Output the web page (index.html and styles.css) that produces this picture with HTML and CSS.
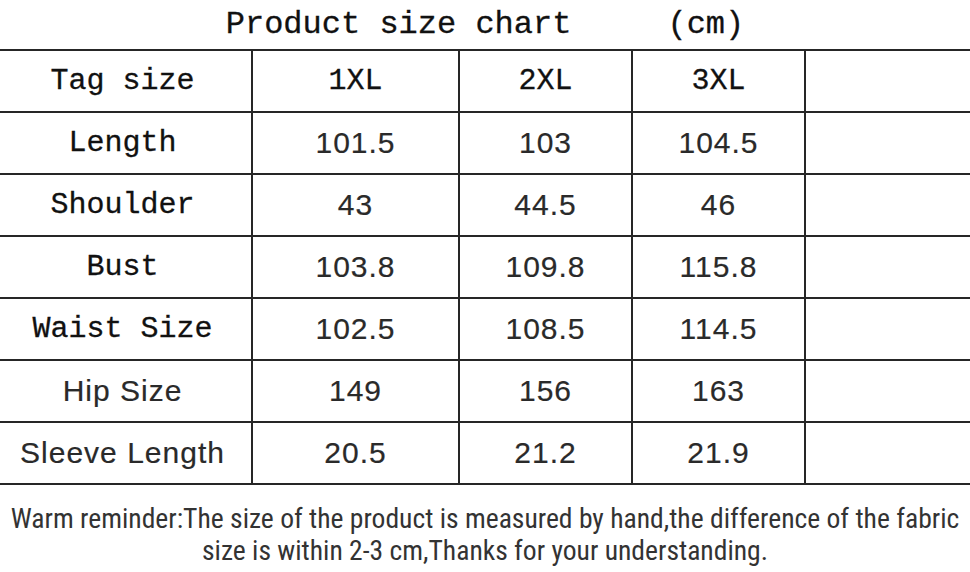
FILE: index.html
```html
<!DOCTYPE html>
<html>
<head>
<meta charset="utf-8">
<link rel="stylesheet" href="styles.css">
</head>
<body>
<div class="chart">
  <h1 class="title">Product size chart     (cm)</h1>
  <table class="sizes">
    <colgroup>
      <col class="c0"><col class="c1"><col class="c2"><col class="c3"><col class="c4">
    </colgroup>
    <tr><td class="mono">Tag size</td><td class="mono">1XL</td><td class="mono">2XL</td><td class="mono">3XL</td><td></td></tr>
    <tr><td class="mono">Length</td><td>101.5</td><td>103</td><td>104.5</td><td></td></tr>
    <tr><td class="mono">Shoulder</td><td>43</td><td>44.5</td><td>46</td><td></td></tr>
    <tr><td class="mono">Bust</td><td>103.8</td><td>109.8</td><td>115.8</td><td></td></tr>
    <tr><td class="mono">Waist Size</td><td>102.5</td><td>108.5</td><td>114.5</td><td></td></tr>
    <tr><td>Hip Size</td><td>149</td><td>156</td><td>163</td><td></td></tr>
    <tr><td>Sleeve Length</td><td>20.5</td><td>21.2</td><td>21.9</td><td></td></tr>
  </table>
  <p class="note">Warm reminder:The size of the product is measured by hand,the difference of the fabric<br>size is within 2-3 cm,Thanks for your understanding.</p>
</div>
</body>
</html>
```
FILE: styles.css
```css
html, body {
  margin: 0;
  padding: 0;
  background: #fff;
}
.chart {
  width: 970px;
  overflow: hidden;
  color: #1e1e1e;
}
.title {
  margin: 0;
  height: 49px;
  font-family: "Liberation Mono", "DejaVu Sans Mono", monospace;
  font-size: 32px;
  font-weight: normal;
  line-height: 50px;
  white-space: pre;
  text-align: center;
  color: #111;
  -webkit-text-stroke: 0.3px #111;
}
.sizes {
  border-collapse: collapse;
  table-layout: fixed;
  width: 978px;
}
.c0 { width: 252px; }
.c1 { width: 207px; }
.c2 { width: 173px; }
.c3 { width: 173px; }
.c4 { width: 173px; }
.sizes td {
  height: 60px;
  padding: 0;
  border: 2px solid #262626;
  text-align: center;
  vertical-align: middle;
  font-family: "Liberation Sans", Arial, sans-serif;
  font-size: 30px;
  letter-spacing: 1px;
  color: #2a2a2a;
  -webkit-text-stroke: 0.2px #2a2a2a;
}
.sizes tr td:first-child { border-left: none; padding-right: 6px; }
.sizes tr td:last-child { border-right: none; }
.sizes td.mono {
  font-family: "Liberation Mono", "DejaVu Sans Mono", monospace;
  font-size: 30px;
  letter-spacing: 0;
  color: #111;
  -webkit-text-stroke: 0.3px #111;
}
.note {
  margin: 18px 0 0;
  text-align: center;
  font-family: "Liberation Sans Narrow", "Roboto Condensed", "Liberation Sans", sans-serif;
  font-size: 27.6px;
  line-height: 32px;
  color: #333;
}
```
